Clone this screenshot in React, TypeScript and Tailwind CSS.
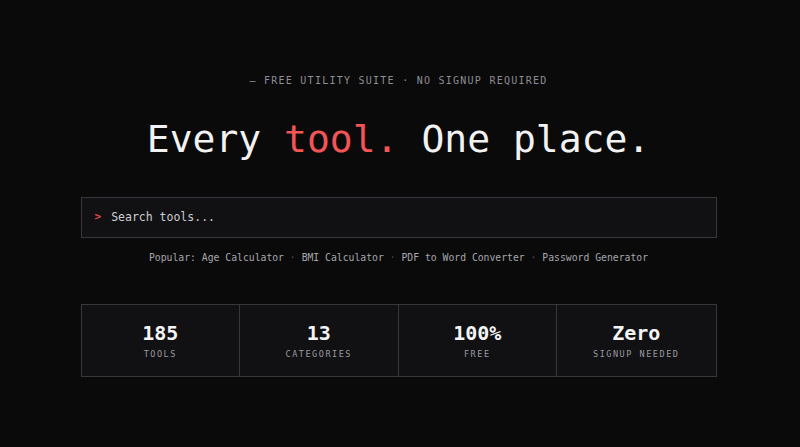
import React from 'react';

const POPULAR = ['Age Calculator', 'BMI Calculator', 'PDF to Word Converter', 'Password Generator'];

const STATS = [
  { value: '185', label: 'Tools' },
  { value: '13', label: 'Categories' },
  { value: '100%', label: 'Free' },
  { value: 'Zero', label: 'Signup Needed' },
];

const mono = { fontFamily: '"DejaVu Sans Mono", "Liberation Mono", monospace' };

export default function App() {
  return (
    <div className="flex min-h-[447px] w-full justify-center bg-[#0a0a0b] pr-[3px] text-white" style={mono}>
      <div className="flex w-[636px] flex-col items-center pt-[75px]">
        <p className="text-[10px] leading-[12px] tracking-[0.125em] text-[#8d8d93] uppercase">
          — Free Utility Suite · No Signup Required
        </p>

        <h1 className="mt-[33px] text-[38px] leading-[38px] text-[#f2f2f2]">
          Every <span className="text-[#f25555]">tool.</span> One place.
        </h1>

        <div className="mt-[39px] flex h-[41px] w-full items-center gap-[10px] border border-[#36363b] bg-[#111114] pl-[13px]">
          <span className="text-[11px] font-bold text-[#e04848]">&gt;</span>
          <span className="text-[11.5px] text-[#cdcdd1]">Search tools...</span>
        </div>

        <p className="mt-[14px] text-[9.75px] leading-[12px] text-[#a6a6ac]">
          Popular:{' '}
          {POPULAR.map((name, i) => (
            <React.Fragment key={name}>
              {i > 0 && <span className="text-[#4a4a50]"> · </span>}
              <span>{name}</span>
            </React.Fragment>
          ))}
        </p>

        <div className="mt-[40px] grid w-full grid-cols-4 divide-x divide-[#36363b] border border-[#36363b] bg-[#111114]">
          {STATS.map((s) => (
            <div key={s.label} className="flex flex-col items-center pt-[16px] pb-[16px]">
              <span className="text-[20px] leading-[24px] font-bold text-[#f4f4f4]">{s.value}</span>
              <span className="mt-[3px] text-[8.5px] leading-[12px] tracking-[0.18em] text-[#9a9aa0] uppercase">
                {s.label}
              </span>
            </div>
          ))}
        </div>
      </div>
    </div>
  );
}
